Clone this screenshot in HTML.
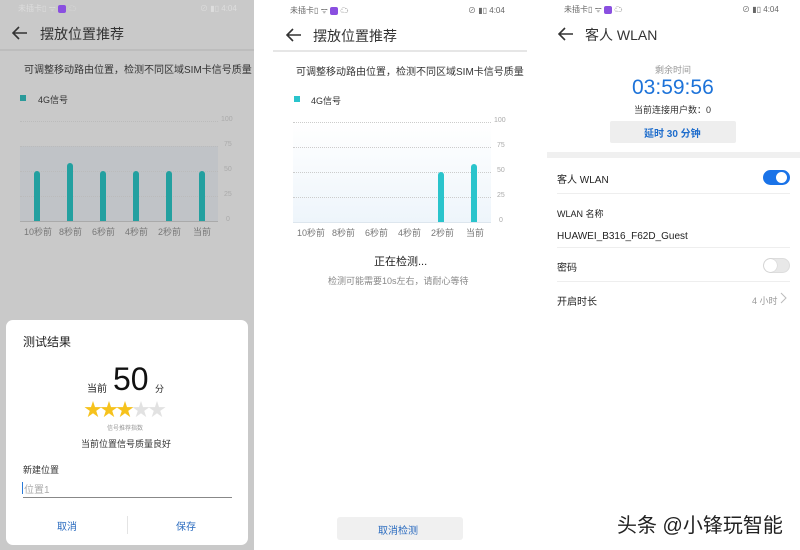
<!DOCTYPE html>
<html><head><meta charset="utf-8"><style>
*{margin:0;padding:0;box-sizing:border-box}
body{width:800px;height:550px;position:relative;overflow:hidden;background:#fff;font-family:"Liberation Sans","Noto Sans CJK SC",sans-serif;color:#222}
.a{position:absolute;white-space:nowrap}
.sb{font-size:8px;color:#666}
.grid{position:absolute;height:0;border-top:1px dotted #bbb}
.ax{position:absolute;font-size:7px;color:#aaa}
.lb{position:absolute;font-size:9px;color:#777}
.bar{position:absolute;width:6px;border-radius:3px 3px 0 0}
</style></head><body>

<!-- LEFT PANEL -->
<div class="a" style="left:0;top:0;width:254px;height:550px;background:#c9c9c9"></div>
<div class="a sb" style="left:18px;top:3px;color:#ddd">未插卡▯ ᯤ <span style="display:inline-block;width:8px;height:8px;background:#8a4fe0;border-radius:2px;vertical-align:middle"></span> ☁</div>
<div class="a sb" style="left:200px;top:3px;color:#ddd">⊘ ▮▯ 4:04</div>
<svg class="a" style="left:12px;top:26px" width="16" height="14"><path d="M15 7H2M7 1L1 7l6 6" stroke="#333" stroke-width="1.6" fill="none"/></svg>
<div class="a" style="left:40px;top:24px;font-size:14px;color:#333">摆放位置推荐</div>
<div class="a" style="left:0;top:49px;width:254px;height:2px;background:#bdbdbd"></div>
<div class="a" style="left:24px;top:61px;font-size:10px;color:#333">可调整移动路由位置，检测不同区域SIM卡信号质量</div>
<div class="a" style="left:20px;top:95px;width:6px;height:6px;background:#2a9a9a"></div>
<div class="a" style="left:38px;top:93px;font-size:9px;color:#333">4G信号</div>
<div class="a" style="left:20px;top:146px;width:198px;height:75px;background:#c0c3c7"></div>
<div class="grid" style="left:20px;top:121px;width:198px"></div>
<div class="grid" style="left:20px;top:146px;width:198px"></div>
<div class="grid" style="left:20px;top:171px;width:198px"></div>
<div class="grid" style="left:20px;top:196px;width:198px"></div>
<div class="a" style="left:20px;top:221px;width:198px;height:1px;background:#aaa"></div>
<div class="ax" style="left:221px;top:116px">100</div><div class="ax" style="left:224px;top:141px">75</div><div class="ax" style="left:224px;top:166px">50</div><div class="ax" style="left:224px;top:191px">25</div><div class="ax" style="left:226px;top:216px">0</div>
<div class="bar" style="left:34px;top:171px;height:50px;background:#23a0a0"></div>
<div class="bar" style="left:67px;top:163px;height:58px;background:#23a0a0"></div>
<div class="bar" style="left:100px;top:171px;height:50px;background:#23a0a0"></div>
<div class="bar" style="left:133px;top:171px;height:50px;background:#23a0a0"></div>
<div class="bar" style="left:166px;top:171px;height:50px;background:#23a0a0"></div>
<div class="bar" style="left:199px;top:171px;height:50px;background:#23a0a0"></div>
<div class="lb" style="left:24px;top:225px">10秒前</div><div class="lb" style="left:59px;top:225px">8秒前</div><div class="lb" style="left:92px;top:225px">6秒前</div><div class="lb" style="left:125px;top:225px">4秒前</div><div class="lb" style="left:158px;top:225px">2秒前</div><div class="lb" style="left:193px;top:225px">当前</div>

<div class="a" style="left:6px;top:320px;width:242px;height:225px;background:#fff;border-radius:7px"></div>
<div class="a" style="left:23px;top:333px;font-size:12px;color:#222">测试结果</div>
<div class="a" style="left:87px;top:380px;font-size:10px">当前</div>
<div class="a" style="left:113px;top:361px;font-size:32px;color:#111">50</div>
<div class="a" style="left:155px;top:382px;font-size:9px">分</div>
<div class="a" style="left:84px;top:400px;font-size:18px;letter-spacing:-2px;line-height:20px"><span style="color:#f6c21c">★★★</span><span style="color:#e2e2e2">★★</span></div>
<div class="a" style="left:107px;top:423px;font-size:6px;color:#999">信号推荐指数</div>
<div class="a" style="left:81px;top:437px;font-size:9px;color:#333">当前位置信号质量良好</div>
<div class="a" style="left:23px;top:463px;font-size:9px;color:#333">新建位置</div>
<div class="a" style="left:22px;top:482px;width:1px;height:12px;background:#2a7ad8"></div>
<div class="a" style="left:24px;top:481px;font-size:10px;color:#aaa">位置1</div>
<div class="a" style="left:23px;top:497px;width:209px;height:1px;background:#888"></div>
<div class="a" style="left:57px;top:518px;font-size:10px;color:#2a6bbf">取消</div>
<div class="a" style="left:127px;top:516px;width:1px;height:18px;background:#e4e4e4"></div>
<div class="a" style="left:176px;top:518px;font-size:10px;color:#2a6bbf">保存</div>

<!-- MIDDLE -->
<div class="a sb" style="left:290px;top:5px">未插卡▯ ᯤ <span style="display:inline-block;width:8px;height:8px;background:#8a4fe0;border-radius:2px;vertical-align:middle"></span> ☁</div>
<div class="a sb" style="left:468px;top:5px">⊘ ▮▯ 4:04</div>
<svg class="a" style="left:286px;top:28px" width="16" height="14"><path d="M15 7H2M7 1L1 7l6 6" stroke="#333" stroke-width="1.6" fill="none"/></svg>
<div class="a" style="left:313px;top:26px;font-size:14px;color:#333">摆放位置推荐</div>
<div class="a" style="left:273px;top:50px;width:254px;height:2px;background:#e6e6e6"></div>
<div class="a" style="left:296px;top:63px;font-size:10px;color:#333">可调整移动路由位置，检测不同区域SIM卡信号质量</div>
<div class="a" style="left:294px;top:96px;width:6px;height:6px;background:#2ac4cc"></div>
<div class="a" style="left:311px;top:94px;font-size:9px;color:#333">4G信号</div>
<div class="a" style="left:293px;top:122px;width:198px;height:100px;background:linear-gradient(#fff,#eef5fb)"></div>
<div class="grid" style="left:293px;top:122px;width:198px;border-color:#ccc"></div>
<div class="grid" style="left:293px;top:147px;width:198px;border-color:#ccc"></div>
<div class="grid" style="left:293px;top:172px;width:198px;border-color:#ccc"></div>
<div class="grid" style="left:293px;top:197px;width:198px;border-color:#ccc"></div>
<div class="a" style="left:293px;top:222px;width:198px;height:1px;background:#dde6ee"></div>
<div class="ax" style="left:494px;top:117px">100</div><div class="ax" style="left:497px;top:142px">75</div><div class="ax" style="left:497px;top:167px">50</div><div class="ax" style="left:497px;top:192px">25</div><div class="ax" style="left:499px;top:217px">0</div>
<div class="bar" style="left:438px;top:172px;height:50px;background:#2ac4cc"></div>
<div class="bar" style="left:471px;top:164px;height:58px;background:#2ac4cc"></div>
<div class="lb" style="left:297px;top:226px">10秒前</div><div class="lb" style="left:332px;top:226px">8秒前</div><div class="lb" style="left:365px;top:226px">6秒前</div><div class="lb" style="left:398px;top:226px">4秒前</div><div class="lb" style="left:431px;top:226px">2秒前</div><div class="lb" style="left:466px;top:226px">当前</div>
<div class="a" style="left:374px;top:253px;font-size:11px;color:#222">正在检测...</div>
<div class="a" style="left:328px;top:274px;font-size:9px;color:#888">检测可能需要10s左右，请耐心等待</div>
<div class="a" style="left:337px;top:517px;width:126px;height:23px;background:#f0f0f0;border-radius:3px"></div>
<div class="a" style="left:378px;top:522px;font-size:10px;color:#2a6bbf">取消检测</div>

<!-- RIGHT -->
<div class="a sb" style="left:564px;top:4px">未插卡▯ ᯤ <span style="display:inline-block;width:8px;height:8px;background:#8a4fe0;border-radius:2px;vertical-align:middle"></span> ☁</div>
<div class="a sb" style="left:742px;top:4px">⊘ ▮▯ 4:04</div>
<svg class="a" style="left:558px;top:27px" width="16" height="14"><path d="M15 7H2M7 1L1 7l6 6" stroke="#333" stroke-width="1.6" fill="none"/></svg>
<div class="a" style="left:585px;top:25px;font-size:14px;color:#333">客人 WLAN</div>
<div class="a" style="left:655px;top:63px;font-size:9px;color:#999">剩余时间</div>
<div class="a" style="left:632px;top:76px;font-size:21px;color:#1d73d9">03:59:56</div>
<div class="a" style="left:634px;top:103px;font-size:9px;color:#333">当前连接用户数：0</div>
<div class="a" style="left:610px;top:121px;width:126px;height:22px;background:#eee;border-radius:2px"></div>
<div class="a" style="left:644px;top:125px;font-size:10px;color:#1d6ccc;font-weight:bold">延时 30 分钟</div>
<div class="a" style="left:547px;top:152px;width:253px;height:6px;background:#f0f0f0"></div>
<div class="a" style="left:557px;top:171px;font-size:10px;color:#222">客人 WLAN</div>
<div class="a" style="left:763px;top:170px;width:27px;height:15px;border-radius:8px;background:#1a73e8"></div>
<div class="a" style="left:776px;top:172px;width:11px;height:11px;border-radius:50%;background:#fff"></div>
<div class="a" style="left:557px;top:193px;width:233px;height:1px;background:#eee"></div>
<div class="a" style="left:557px;top:207px;font-size:9px;color:#222">WLAN 名称</div>
<div class="a" style="left:557px;top:231px;font-size:10px;color:#222">HUAWEI_B316_F62D_Guest</div>
<div class="a" style="left:557px;top:247px;width:233px;height:1px;background:#eee"></div>
<div class="a" style="left:557px;top:259px;font-size:10px;color:#222">密码</div>
<div class="a" style="left:763px;top:258px;width:27px;height:15px;border-radius:8px;background:#e8e8e8;border:1px solid #ddd"></div>
<div class="a" style="left:764px;top:259px;width:13px;height:13px;border-radius:50%;background:#fff;box-shadow:0 0 1px #aaa"></div>
<div class="a" style="left:557px;top:281px;width:233px;height:1px;background:#eee"></div>
<div class="a" style="left:557px;top:293px;font-size:10px;color:#222">开启时长</div>
<div class="a" style="left:752px;top:294px;font-size:9px;color:#999">4 小时</div>
<svg class="a" style="left:780px;top:292px" width="8" height="12"><path d="M1 1l5 5-5 5" stroke="#bbb" stroke-width="1" fill="none"/></svg>

<div class="a" style="left:617px;top:509px;font-size:20px;color:#222;text-shadow:0 0 2px #fff">头条 @小锋玩智能</div>
</body></html>
